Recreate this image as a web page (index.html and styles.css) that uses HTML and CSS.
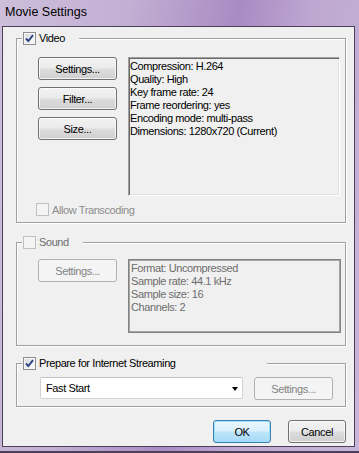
FILE: index.html
```html
<!DOCTYPE html>
<html lang="en">
<head>
    <meta charset="UTF-8">
    <title>Movie Settings</title>
    <link rel="stylesheet" href="styles.css">
</head>
<body>
    <div class="window">
        <div class="titlebar">Movie Settings</div>
        <div class="client">

            <!-- Video -->
            <div class="group group-video">
                <label class="group-head">
                    <span class="cb checked">
                        <svg width="11" height="11" viewBox="0 0 11 11"><path d="M2 5.5 L4.3 8 L9 2.2" fill="none" stroke="#2f4383" stroke-width="1.9"/></svg>
                    </span>
                    <span>Video</span>
                </label>
                <div class="group-row">
                    <div class="btn-col">
                        <button class="btn">Settings...</button>
                        <button class="btn">Filter...</button>
                        <button class="btn">Size...</button>
                    </div>
                    <div class="info info-video">
                        Compression: H.264<br>
                        Quality: High<br>
                        Key frame rate: 24<br>
                        Frame reordering: yes<br>
                        Encoding mode: multi-pass<br>
                        Dimensions: 1280x720 (Current)
                    </div>
                </div>
                <label class="check-row disabled">
                    <span class="cb off"></span>
                    <span>Allow Transcoding</span>
                </label>
            </div>

            <!-- Sound -->
            <div class="group group-sound">
                <label class="group-head disabled-head">
                    <span class="cb off"></span>
                    <span>Sound</span>
                </label>
                <div class="group-row">
                    <div class="btn-col">
                        <button class="btn" disabled>Settings...</button>
                    </div>
                    <div class="info info-sound">
                        Format: Uncompressed<br>
                        Sample rate: 44.1 kHz<br>
                        Sample size: 16<br>
                        Channels: 2
                    </div>
                </div>
            </div>

            <!-- Streaming -->
            <div class="group group-stream">
                <label class="group-head head-wide">
                    <span class="cb checked">
                        <svg width="11" height="11" viewBox="0 0 11 11"><path d="M2 5.5 L4.3 8 L9 2.2" fill="none" stroke="#2f4383" stroke-width="1.9"/></svg>
                    </span>
                    <span>Prepare for Internet Streaming</span>
                </label>
                <div class="stream-row">
                    <div class="dropdown">
                        <span>Fast Start</span>
                        <span class="arrow"></span>
                    </div>
                    <button class="btn" disabled>Settings...</button>
                </div>
            </div>

            <div class="actions">
                <button class="btn btn-small btn-default">OK</button>
                <button class="btn btn-small">Cancel</button>
            </div>
        </div>
    </div>
</body>
</html>
```

FILE: styles.css
```css
html, body {
    margin: 0;
    padding: 0;
}
body {
    font-family: 'Liberation Sans', Arial, sans-serif;
    font-size: 11px;
    letter-spacing: -0.4px;
    color: #000;
}
.window {
    width: 359px;
    height: 453px;
    box-sizing: border-box;
    display: flex;
    flex-direction: column;
    padding: 0 4px 4px 2px;
    border-bottom: 2px solid #4b3f5a;
    background: linear-gradient(100deg, #cdbedb 0%, #c2afd3 30%, #a98bc3 55%, #bea8d2 72%, #c7b6d9 100%);
}
.titlebar {
    height: 26px;
    box-sizing: border-box;
    padding: 5px 0 0 3px;
    font-size: 12.5px;
    letter-spacing: 0;
    color: #000;
}
.client {
    flex: 1;
    background-color: #f0f0f0;
    border: 1px solid #4b3f5a;
    display: flex;
    flex-direction: column;
}

/* group boxes */
.group {
    width: 330px;
    box-sizing: border-box;
    margin-left: 13px;
    border: 1px solid #a0a0a0;
    box-shadow: 1px 1px 0 #fff, inset 1px 1px 0 #fff;
    display: flex;
    flex-direction: column;
    align-items: flex-start;
}
.group-video {
    margin-top: 11px;
    height: 185px;
}
.group-sound {
    margin-top: 19px;
    height: 104px;
}
.group-stream {
    margin-top: 17px;
    height: 44px;
}
.group-head {
    display: flex;
    align-items: center;
    gap: 3px;
    height: 14px;
    margin: -8px 0 0 5px;
    padding: 0 14px 0 1px;
    background-color: #f0f0f0;
}
.head-wide {
    padding-right: 91px;
}
.disabled-head {
    color: #6d6d6d;
}
.group-row {
    display: flex;
    gap: 11px;
    margin: 12px 0 0 21px;
}
.group-sound .group-row {
    margin-top: 10px;
}
.btn-col {
    display: flex;
    flex-direction: column;
    gap: 7px;
}

/* checkbox */
.cb {
    width: 13px;
    height: 13px;
    box-sizing: border-box;
    border: 1px solid #8e8f8f;
    background: linear-gradient(135deg, #d3d7dc 0%, #eef0f2 60%, #fbfbfb 100%);
    box-shadow: inset 0 0 0 1px #f7f7f7;
    display: flex;
    flex: none;
}
.cb.off {
    border-color: #c0c0c0;
    background: #f4f4f4;
    box-shadow: none;
}
.check-row {
    display: flex;
    align-items: center;
    gap: 3px;
    height: 13px;
    margin: 7px 0 0 19px;
}
.check-row.disabled {
    color: #8d8d8d;
}

/* info boxes */
.info {
    box-sizing: border-box;
    line-height: 13px;
}
.info-video {
    width: 212px;
    height: 139px;
    padding: 2px 1px;
    border: 1px solid;
    border-color: #a0a0a0 #fff #fff #a0a0a0;
    box-shadow: inset 1px 1px 0 #696969, inset -1px -1px 0 #e3e3e3;
}
.info-sound {
    width: 213px;
    height: 74px;
    padding: 2px 2px;
    color: #6d6d6d;
    border: 1px solid #828282;
    box-shadow: inset 0 0 0 1px #a6a6a6;
}

/* buttons */
.btn {
    width: 79px;
    height: 23px;
    box-sizing: border-box;
    padding: 0;
    font-family: inherit;
    font-size: 11px;
    letter-spacing: -0.4px;
    color: #000;
    border: 1px solid #707070;
    border-radius: 3px;
    background: linear-gradient(#f2f2f2 0%, #ebebeb 48%, #dddddd 52%, #cfcfcf 100%);
    box-shadow: inset 0 0 0 1px rgba(255, 255, 255, 0.75);
}
.btn:disabled {
    color: #838383;
    border-color: #adb2b5;
    background: #f4f4f4;
    box-shadow: none;
}
.btn-small {
    width: 58px;
}
.btn-default {
    border-color: #3c7fb1;
    background: linear-gradient(#eaf6fd 0%, #d9f0fc 48%, #bee6fd 52%, #a7d9f5 100%);
    box-shadow: inset 0 0 0 1px #9ce0ff;
}

/* streaming row */
.stream-row {
    display: flex;
    align-items: flex-start;
    gap: 11px;
    margin: 7px 0 0 23px;
}
.dropdown {
    width: 203px;
    height: 22px;
    box-sizing: border-box;
    display: flex;
    align-items: center;
    justify-content: space-between;
    padding: 0 4px 0 5px;
    background-color: #fff;
    border: 1px solid #d2d2d2;
    border-top-color: #c2c2c2;
    border-radius: 2px;
}
.arrow {
    width: 0;
    height: 0;
    border-left: 3.5px solid transparent;
    border-right: 3.5px solid transparent;
    border-top: 4px solid #000;
    margin-top: 1px;
}

.actions {
    display: flex;
    justify-content: flex-end;
    gap: 17px;
    margin-top: 13px;
    padding-right: 8px;
}
```
